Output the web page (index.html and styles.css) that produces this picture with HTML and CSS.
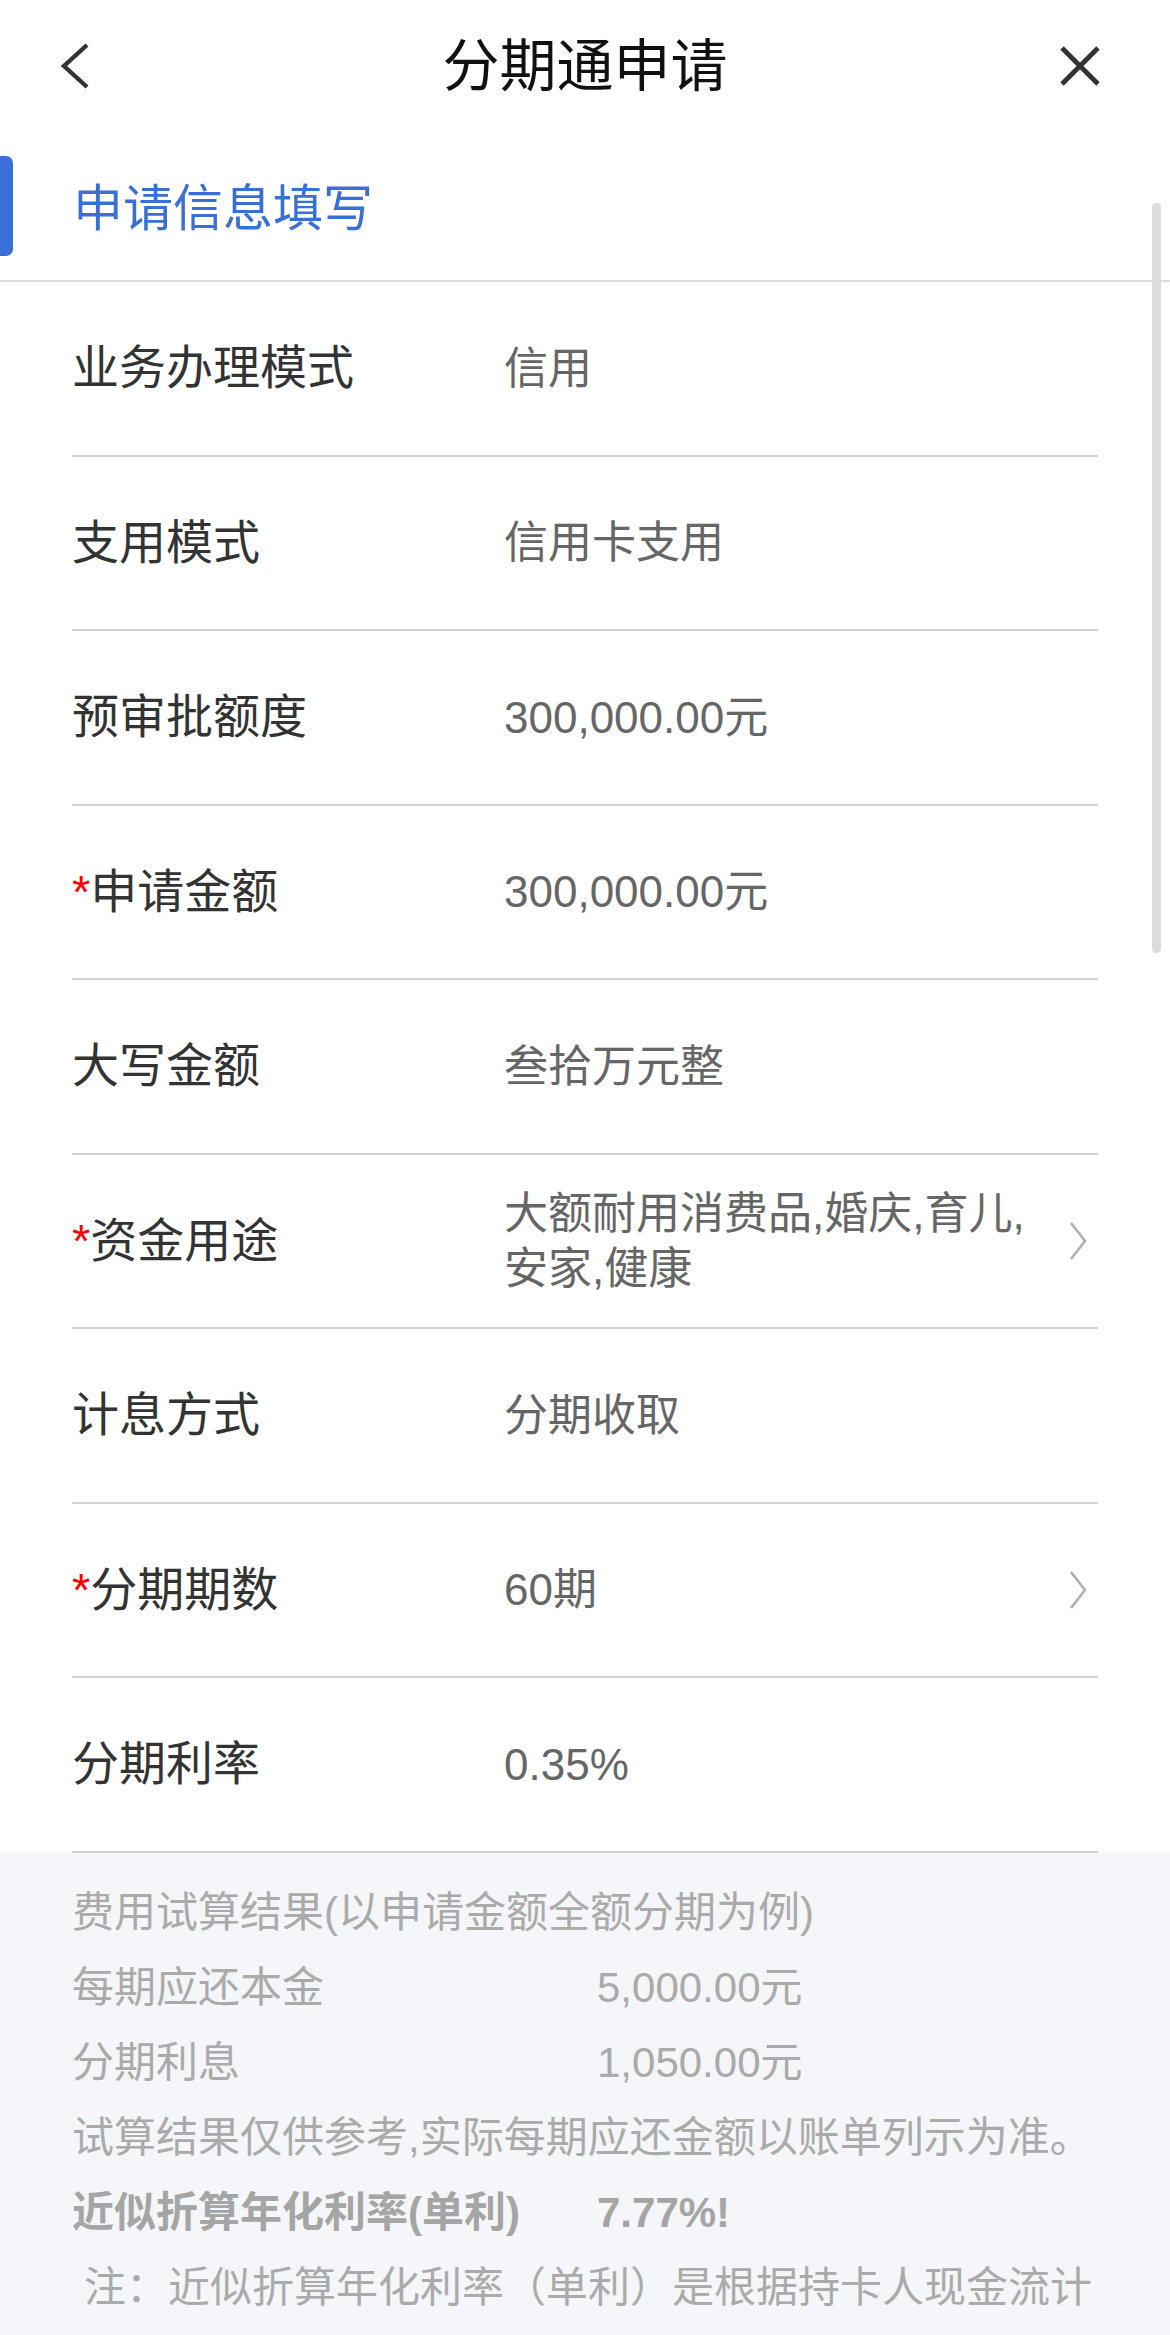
FILE: index.html
```html
<!DOCTYPE html>
<html lang="zh-CN">
<head>
    <meta charset="UTF-8">
    <meta name="viewport" content="width=device-width, initial-scale=1.0">
    <title>分期通申请</title>
    <link rel="stylesheet" href="styles.css">
</head>
<body>
<div class="page">
    <header class="navbar">
        <span class="nav-back">
            <svg width="30" height="46" viewBox="0 0 30 46"><path d="M27 2 L4 23 L27 44" fill="none" stroke="#333" stroke-width="4.4"/></svg>
        </span>
        <h1 class="nav-title">分期通申请</h1>
        <span class="nav-close">
            <svg width="42" height="42" viewBox="0 0 42 42"><path d="M3 3 L39 39 M39 3 L3 39" fill="none" stroke="#333" stroke-width="4.8"/></svg>
        </span>
    </header>

    <div class="section-head">
        <span class="section-mark"></span>
        <h2>申请信息填写</h2>
    </div>

    <div class="form-list">
        <div class="form-row">
            <div class="row-label">业务办理模式</div>
            <div class="row-value">信用</div>
        </div>
        <div class="form-row">
            <div class="row-label">支用模式</div>
            <div class="row-value">信用卡支用</div>
        </div>
        <div class="form-row">
            <div class="row-label">预审批额度</div>
            <div class="row-value">300,000.00元</div>
        </div>
        <div class="form-row">
            <div class="row-label"><span class="req">*</span>申请金额</div>
            <div class="row-value">300,000.00元</div>
        </div>
        <div class="form-row">
            <div class="row-label">大写金额</div>
            <div class="row-value">叁拾万元整</div>
        </div>
        <div class="form-row">
            <div class="row-label"><span class="req">*</span>资金用途</div>
            <div class="row-value">大额耐用消费品,婚庆,育儿,安家,健康</div>
            <svg class="row-arrow" width="18" height="40" viewBox="0 0 18 40"><path d="M2 2 L16 20 L2 38" fill="none" stroke="#b0b0b0" stroke-width="2.6"/></svg>
        </div>
        <div class="form-row">
            <div class="row-label">计息方式</div>
            <div class="row-value">分期收取</div>
        </div>
        <div class="form-row">
            <div class="row-label"><span class="req">*</span>分期期数</div>
            <div class="row-value">60期</div>
            <svg class="row-arrow" width="18" height="40" viewBox="0 0 18 40"><path d="M2 2 L16 20 L2 38" fill="none" stroke="#b0b0b0" stroke-width="2.6"/></svg>
        </div>
        <div class="form-row">
            <div class="row-label">分期利率</div>
            <div class="row-value">0.35%</div>
        </div>
    </div>

    <div class="trial">
        <p class="trial-line">费用试算结果(以申请金额全额分期为例)</p>
        <div class="trial-line trial-row">
            <span class="trial-label">每期应还本金</span>
            <span>5,000.00元</span>
        </div>
        <div class="trial-line trial-row">
            <span class="trial-label">分期利息</span>
            <span>1,050.00元</span>
        </div>
        <p class="trial-line">试算结果仅供参考,实际每期应还金额以账单列示为准。</p>
        <div class="trial-line trial-row trial-bold">
            <span class="trial-label">近似折算年化利率(单利)</span>
            <span>7.77%!</span>
        </div>
        <p class="trial-line trial-note">注：近似折算年化利率（单利）是根据持卡人现金流计</p>
    </div>

    <div class="scroll-thumb"></div>
</div>
</body>
</html>
```

FILE: styles.css
```css
body {
    margin: 0;
    padding: 0;
    background-color: #fff;
    font-family: "Liberation Sans", "Noto Sans CJK SC", sans-serif;
}
.page {
    position: relative;
    width: 1170px;
}
.navbar {
    display: grid;
    grid-template-columns: 1fr auto 1fr;
    align-items: center;
    height: 132px;
}
.nav-back {
    display: flex;
    padding-left: 60px;
}
.nav-close {
    display: flex;
    justify-content: flex-end;
    padding-right: 69px;
}
.nav-title {
    margin: 0;
    font-size: 57px;
    font-weight: 400;
    line-height: 70px;
    color: #111;
}
.section-head {
    display: flex;
    align-items: center;
    height: 148px;
    border-bottom: 2px solid #dedede;
}
.section-mark {
    width: 13px;
    height: 100px;
    background-color: #3b6fd8;
    border-radius: 0 7px 7px 0;
}
.section-head h2 {
    margin: 6px 0 0 60px;
    font-size: 50px;
    font-weight: 400;
    line-height: 60px;
    color: #3b6fd8;
}
.form-list {
    padding: 0 72px;
}
.form-row {
    display: flex;
    align-items: center;
    box-sizing: border-box;
    height: 174.5px;
    border-bottom: 2px solid #d2d2d2;
}
.row-label {
    flex-shrink: 0;
    width: 432px;
    font-size: 47px;
    line-height: 56px;
    color: #333;
}
.req {
    color: #f00;
}
.row-value {
    flex: 1;
    font-size: 44px;
    line-height: 55px;
    color: #666;
}
.row-arrow {
    flex-shrink: 0;
    margin: 0 11px 0 25px;
}
.trial {
    background-color: #f4f6f9;
    padding: 22px 72px 30px;
    color: #aaa;
    font-size: 42px;
}
.trial-line {
    margin: 0;
    line-height: 75px;
    white-space: nowrap;
}
.trial-row {
    display: flex;
}
.trial-label {
    width: 525px;
}
.trial-bold {
    font-weight: 700;
    color: #a5a5a5;
}
.trial-note {
    text-indent: 12px;
}
.scroll-thumb {
    position: absolute;
    top: 203px;
    left: 1152px;
    width: 9px;
    height: 750px;
    border-radius: 5px;
    background-color: #dcdcdc;
}
```
